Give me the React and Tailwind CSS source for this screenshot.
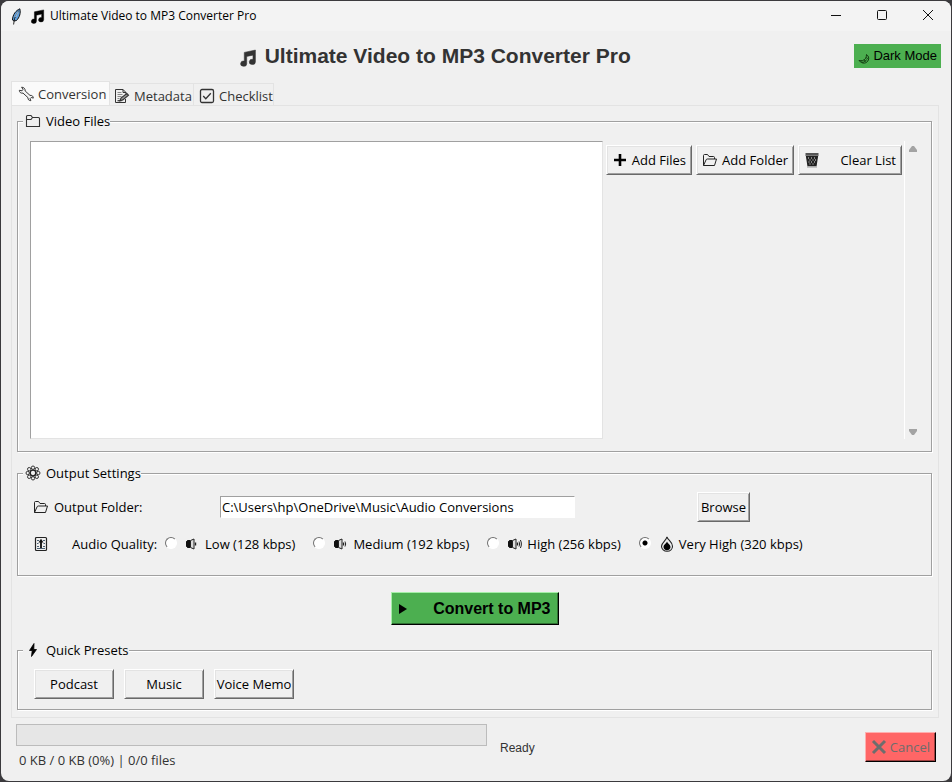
import React, { useState } from "react";

const raised =
  "flex h-[30px] items-center border border-t-white border-l-white border-r-[#696969] border-b-[#696969] bg-[#f0f0f0] text-black shadow-[inset_1px_1px_0_#e3e3e3,inset_-1px_-1px_0_#a0a0a0]";

function Note({ className }) {
  return (
    <svg className={className} viewBox="0 0 17 17" aria-hidden="true">
      <path
        d="M5 3.200 15.500 1v11.200a2.900 2.500 0 1 1-2.300-2.500V5.800L7.300 7v6.900a2.900 2.500 0 1 1-2.300-2.500z"
        fill="currentColor"
        stroke="currentColor"
        strokeWidth=".5"
      />
    </svg>
  );
}

function Feather() {
  return (
    <svg className="h-[17px] w-[11px]" viewBox="0 0 11 17" aria-hidden="true">
      <path d="M8.800.8C5 2.500 1.600 6.500 1.500 12l1.500 1 2.500-.5C8.500 9.500 10 5 8.800.8z" fill="#5f9fdc" stroke="#111" strokeWidth="1" />
      <path d="M7.800 2.500 3.500 10.500 2.600 16.500" fill="none" stroke="#111" strokeWidth=".9" />
      <path d="M7.300 3.500 4.500 9" stroke="#d8ecff" strokeWidth=".8" />
    </svg>
  );
}

function Wrench() {
  return (
    <svg className="h-4 w-4" viewBox="0 0 16 16" fill="#f4f4f4" stroke="#3a3a3a" strokeWidth="1" strokeLinejoin="round" aria-hidden="true">
      <path d="M3.600 1.200 5 3.400 4 4.800 1.300 4.300c0 2 1.500 3.200 3.700 2.800l5 4.600c-.2 1.900.9 3 2.900 3l-.9-2 1.200-1.200 2.100.6c-.1-2-1.300-3-3.300-2.700L7.200 5C7.300 2.600 5.800 1.200 3.600 1.200z" />
    </svg>
  );
}

function Memo() {
  return (
    <svg className="h-4 w-4" viewBox="0 0 16 16" fill="none" stroke="#333" aria-hidden="true">
      <path d="M9 1.500H1.500v13h10V11M9 1.500l3 3v1.500M9 1.500v3h3" strokeWidth="1" />
      <path d="M3.500 4.500h4M3.500 6.500h5M3.500 8.500h4M3.500 10.500h2" stroke="#8a8a8a" />
      <path d="m12.800 5.500 1.700 1.700-5.700 4.700-2.900.8 1.100-2.600z" fill="#999" strokeWidth="1.100" />
      <path d="M3.500 12.700h4" strokeWidth="1.200" />
    </svg>
  );
}

function CheckBoxIcon() {
  return (
    <svg className="h-4 w-4" viewBox="0 0 16 16" fill="none" stroke="#333" strokeWidth="1.300" aria-hidden="true">
      <rect x="1.500" y="1.500" width="13" height="13" rx="1.500" />
      <path d="m4.200 8 2.600 2.800 5-5.600" />
    </svg>
  );
}

function Folder() {
  return (
    <svg className="h-4 w-4" viewBox="0 0 16 16" fill="none" stroke="#333" strokeWidth="1.100" aria-hidden="true">
      <path d="M1.500 13.500v-10c0-.7.4-1 1-1h3.500l1.500 2h6c.7 0 1 .4 1 1v8zM1.500 6.500H6l1.500-2" />
    </svg>
  );
}

function OpenFolder() {
  return (
    <svg className="h-4 w-4" viewBox="0 0 16 16" fill="none" stroke="#222" strokeWidth="1" strokeLinejoin="round" aria-hidden="true">
      <path d="M1.500 13.500v-10c0-.6.4-1 1-1h3l1.500 2h4.500c.6 0 1 .4 1 1v1.500M1.500 13.500l2.500-5.500c.3-.7.6-1 1.300-1h9.200l-2 6.500z" />
    </svg>
  );
}

function Gear() {
  return (
    <svg className="h-4 w-4" viewBox="0 0 16 16" fill="none" stroke="#222" strokeWidth="1" aria-hidden="true">
      <g strokeWidth=".9">
        <circle cx="8" cy="2.700" r="1.700" />
        <circle cx="8" cy="13.300" r="1.700" />
        <circle cx="2.700" cy="8" r="1.700" />
        <circle cx="13.300" cy="8" r="1.700" />
        <circle cx="4.200" cy="4.200" r="1.700" />
        <circle cx="11.800" cy="4.200" r="1.700" />
        <circle cx="4.200" cy="11.800" r="1.700" />
        <circle cx="11.800" cy="11.800" r="1.700" />
      </g>
      <circle cx="8" cy="8" r="2.800" strokeWidth="1.300" />
    </svg>
  );
}

function Basket() {
  return (
    <svg className="h-4 w-4" viewBox="0 0 16 16" aria-hidden="true">
      <path d="M1.500 2h13M2.500 4 4 13.500h8L13.500 4z" fill="#222" stroke="#222" strokeWidth="1.300" />
      <path d="M1.500 3.500h13" stroke="#777" />
      <path d="M4 6h1M7 6h1M10 6h1M5.500 8h1M8.500 8h1M11 8h1M4.500 10h1M7 10h1M10 10h1M5.500 12h1M8.500 12h1" stroke="#e4e4e4" strokeWidth="1.200" />
      <path d="M3 15h10" stroke="#999" />
    </svg>
  );
}

function Levels() {
  return (
    <svg className="h-4 w-[14px]" viewBox="0 0 14 16" fill="none" stroke="#222" aria-hidden="true">
      <rect x="1.500" y="1.500" width="11" height="13" rx="1" strokeWidth="1.200" />
      <path d="M3 4.500h2M9 4.500h2M3 7.500h1.500M9.500 7.500H11M3 10.500h2M9 10.500h2M3 12.500h8" stroke="#4c6276" />
      <path d="M7 12V5" strokeWidth="2" />
      <path d="M7 2.800 9.500 6.500h-5z" fill="#111" stroke="none" />
    </svg>
  );
}

function Speaker({ waves }) {
  return (
    <svg className="h-4 w-4" viewBox="0 0 16 16" fill="none" stroke="#222" aria-hidden="true">
      <path d="M2.500 4.500H5v7H2.500l-1-1v-5z" fill="#111" stroke="#111" />
      <path d="m5.500 4.500 3.500-1.500v10l-3.500-1.500z" fill="#ddd" strokeWidth="1" />
      <path d="M10.500 6.500v3" strokeWidth="1.400" />
      {waves > 1 && <path d="M12 5.500c.8 1.500.8 3.500 0 5" />}
      {waves > 2 && <path d="M13.400 4c1.300 2.500 1.300 5.500 0 8" />}
    </svg>
  );
}

function Flame() {
  return (
    <svg className="h-4 w-4" viewBox="0 0 16 16" aria-hidden="true">
      <path d="M8 .8c.5 3 5.500 5.200 5.500 9.400 0 3-2.300 5-5.400 5s-5.600-2-5.600-5C2.500 6.500 7.500 4.500 8 .8z" fill="#eee" stroke="#222" strokeWidth="1.100" />
      <path d="M8 5.500c.5 2 3.500 3 3.500 5.500 0 2-1.500 3.200-3.500 3.200S4.500 13 4.500 11c0-2.500 3-3.500 3.500-5.500z" fill="#050505" />
    </svg>
  );
}

function Bolt() {
  return (
    <svg className="h-4 w-4" viewBox="0 0 16 16" aria-hidden="true">
      <path d="M9 1.500 4.500 8.500h2.700L6.500 14.500l5-7H8.800z" fill="#000" stroke="#000" strokeWidth=".8" />
    </svg>
  );
}

function Moon() {
  return (
    <svg className="mt-1.5 h-3 w-3" viewBox="0 0 12 12" fill="none" stroke="#12380f" aria-hidden="true">
      <path d="M8.500 1.500c2 1.500 2.700 3.500 1.800 5.500C9.200 10.500 4.200 11.500 1 7.500c2.500.6 7.500.3 7.500-6z" />
      <path d="M3.500 7.500l1 2.500M6 6.500 7.500 9M8 4.500l2.500 1.500M5 9.500l4-3" strokeWidth=".8" />
    </svg>
  );
}

function Group({ icon, title, className, children }) {
  return (
    <fieldset
      className={
        "flex min-w-0 flex-col border border-[#a0a0a0] shadow-[1px_1px_0_#fff,inset_1px_1px_0_#fff] " + className
      }
    >
      <legend className="ml-[5px] bg-[#f0f0f0] pl-0.5 leading-[18px]">
        <span className="flex items-center gap-[5px]">
          {icon}
          {title}
        </span>
      </legend>
      {children}
    </fieldset>
  );
}

const qualities = [
  { id: "low", label: "Low (128 kbps)", icon: <Speaker waves={1} /> },
  { id: "medium", label: "Medium (192 kbps)", icon: <Speaker waves={2} /> },
  { id: "high", label: "High (256 kbps)", icon: <Speaker waves={3} /> },
  { id: "very-high", label: "Very High (320 kbps)", icon: <Flame /> },
];

export default function App() {
  const [quality, setQuality] = useState("very-high");
  const [folder, setFolder] = useState("C:\\Users\\hp\\OneDrive\\Music\\Audio Conversions");

  return (
    <div className="flex min-h-screen flex-col bg-[#3b3a3d] p-px font-['Open_Sans','Noto_Sans',sans-serif] text-[13px] leading-[18px] whitespace-nowrap text-black">
      <div className="flex flex-1 flex-col rounded-lg bg-[#f0f0f0]">
        <header className="flex h-[30px] items-center rounded-t-lg bg-[#f3f3f3] pl-2.5">
          <Feather />
          <Note className="ml-2 h-[15px] w-[15px]" />
          <span className="ml-[5px] flex-1 text-[12px]">Ultimate Video to MP3 Converter Pro</span>
          <button aria-label="Minimize" className="flex h-full w-[46px] items-center justify-center">
            <svg className="h-3 w-3" viewBox="0 0 12 12" stroke="#111"><path d="M1 5.500h10" /></svg>
          </button>
          <button aria-label="Maximize" className="flex h-full w-[46px] items-center justify-center">
            <svg className="h-3 w-3" viewBox="0 0 12 12" fill="none" stroke="#111"><rect x="1.500" y="0.500" width="9" height="9" rx="1" /></svg>
          </button>
          <button aria-label="Close" className="flex h-full w-[46px] items-center justify-center">
            <svg className="h-3 w-3" viewBox="0 0 12 12" stroke="#111"><path d="m1 0 10 10M11 0 1 10" /></svg>
          </button>
        </header>

        <div className="flex h-[50px] items-center pr-2.5 pl-2.5">
          <h1 className="flex flex-1 items-center justify-center gap-2 pl-1 font-['Liberation_Sans',Arial,sans-serif] text-[21px] leading-6 font-bold text-[#333]">
            <Note className="mt-1 h-[18px] w-[18px]" />
            Ultimate Video to MP3 Converter Pro
          </h1>
          <button className="flex h-6 items-center gap-[3px] bg-[#4caf50] px-1 font-['Liberation_Sans',Arial,sans-serif] text-black">
            <Moon />
            Dark Mode
          </button>
        </div>

        <nav role="tablist" className="flex items-end pl-2.5 text-[#333]">
          <button role="tab" aria-selected="true" className="flex h-6 w-[99px] items-center gap-1 border border-b-0 border-[#e3e3e3] bg-[#fafafa] pl-1.5">
            <Wrench />
            Conversion
          </button>
          <button role="tab" aria-selected="false" className="flex h-[22px] w-[84px] items-center gap-1 border-t border-r border-[#e3e3e3] pt-0.5 pl-1">
            <Memo />
            Metadata
          </button>
          <button role="tab" aria-selected="false" className="flex h-[22px] w-[80px] items-center gap-1 border-t border-r border-[#e3e3e3] pt-0.5 pl-[5px]">
            <CheckBoxIcon />
            Checklist
          </button>
        </nav>

        <main className="mr-3 ml-2.5 flex flex-1 flex-col border border-[#e3e3e3] pt-1.5 pr-1.5 pb-[7px] pl-[5px]">
          <Group icon={<Folder />} title="Video Files" className="flex-1">
            <div className="flex flex-1 pt-[11px] pr-2.5 pb-2.5 pl-3">
              <div role="listbox" aria-label="Video files" className="min-h-[298px] flex-1 border border-t-[#a0a0a0] border-r-[#e3e3e3] border-b-[#e3e3e3] border-l-[#a0a0a0] bg-white" />
              <div className="flex items-start gap-1 pt-1 pr-0.5 pl-[3px]">
                <button className={raised + " w-[86px] justify-between px-[5px]"}>
                  <svg className="h-4 w-4" viewBox="0 0 16 16" stroke="#000" strokeWidth="2.600" aria-hidden="true"><path d="M8 2v12M2 8h12" /></svg>
                  Add Files
                </button>
                <button className={raised + " w-[98px] justify-between px-[5px]"}>
                  <OpenFolder />
                  Add Folder
                </button>
                <button className={raised + " w-[104px] justify-between px-[5px]"}>
                  <Basket />
                  Clear List
                </button>
              </div>
              <div className="flex w-[17px] flex-col items-center justify-between border-l border-white pt-1 pb-[3px]">
                <button aria-label="Scroll up">
                  <svg className="h-2 w-2.5" viewBox="0 0 10 8" fill="#a3a3a3"><path d="M4 1h2l3 4v2H1V5z" /></svg>
                </button>
                <button aria-label="Scroll down">
                  <svg className="h-2 w-2.5" viewBox="0 0 10 8" fill="#a3a3a3"><path d="M4 7h2l3-4V1H1v2z" /></svg>
                </button>
              </div>
            </div>
          </Group>

          <Group icon={<Gear />} title="Output Settings" className="mt-3">
            <div className="flex items-center pt-2.5 pl-[15px]">
              <OpenFolder />
              <label htmlFor="folder" className="ml-[5px] w-[166px]">Output Folder:</label>
              <input
                id="folder"
                value={folder}
                onChange={(e) => setFolder(e.target.value)}
                className="h-[22px] w-[355px] border border-t-[#a0a0a0] border-r-white border-b-white border-l-[#a0a0a0] bg-white pl-px text-[13px] outline-none"
              />
              <button className={raised + " ml-[122px] w-[53px] justify-center"}>Browse</button>
            </div>
            <div role="radiogroup" aria-labelledby="quality-label" className="flex items-center pt-[13px] pb-[22px] pl-4">
              <Levels />
              <span id="quality-label" className="mr-2 ml-6">Audio Quality:</span>
              <div className="flex gap-[18px]">
                {qualities.map((q) => (
                  <label key={q.id} className="flex items-center">
                    <input
                      type="radio"
                      name="quality"
                      checked={quality === q.id}
                      onChange={() => setQuality(q.id)}
                      className="mb-0.5 h-3 w-3 appearance-none rounded-full border border-t-[#707070] border-r-white border-b-white border-l-[#707070] bg-white checked:bg-[radial-gradient(circle,#000_2px,#fff_3px)]"
                    />
                    <span className="mr-1 ml-2">{q.icon}</span>
                    {q.label}
                  </label>
                ))}
              </div>
            </div>
          </Group>

          <button className="mt-4 flex h-[33px] w-[168px] items-center justify-between self-center border border-t-[#a5efa8] border-r-black border-b-black border-l-[#a5efa8] bg-[#4caf50] px-[7px] font-['Liberation_Sans',Arial,sans-serif] text-[16px] font-bold text-black shadow-[inset_-1px_-1px_0_#2f7032]">
            <svg className="h-2.5 w-2" viewBox="0 0 8 10" aria-hidden="true"><path d="M0 0v10l8-5z" /></svg>
            Convert to MP3
          </button>

          <Group icon={<Bolt />} title="Quick Presets" className="mt-4">
            <div className="flex gap-2.5 pt-2.5 pb-2.5 pl-4">
              <button className={raised + " w-20 justify-center"}>Podcast</button>
              <button className={raised + " w-20 justify-center"}>Music</button>
              <button className={raised + " w-20 justify-center"}>Voice Memo</button>
            </div>
          </Group>
        </main>

        <footer className="flex items-center pt-1.5 pr-[15px] pb-3 pl-[15px] text-[#333]">
          <div>
            <div role="progressbar" aria-label="Conversion progress" aria-valuenow={0} className="h-[22px] w-[471px] border border-[#bcbcbc] bg-[#e6e6e6]" />
            <p className="mt-[5px] pl-[3px]">0 KB / 0 KB (0%) | 0/0 files</p>
          </div>
          <span className="ml-[13px] flex-1 pt-0.5 font-['Liberation_Sans',Arial,sans-serif] text-[12px]">Ready</span>
          <button
            disabled
            className="flex h-[30px] w-[71px] items-center justify-between border border-t-[#ffb0b0] border-r-black border-b-black border-l-[#ffb0b0] bg-[#ff6666] px-[5px] text-[#6d6d6d] shadow-[inset_-1px_-1px_0_#a04040]"
          >
            <svg className="h-4 w-4" viewBox="0 0 16 16" stroke="currentColor" strokeWidth="3" aria-hidden="true"><path d="m2 2 12 12M14 2 2 14" /></svg>
            Cancel
          </button>
        </footer>
      </div>
    </div>
  );
}
